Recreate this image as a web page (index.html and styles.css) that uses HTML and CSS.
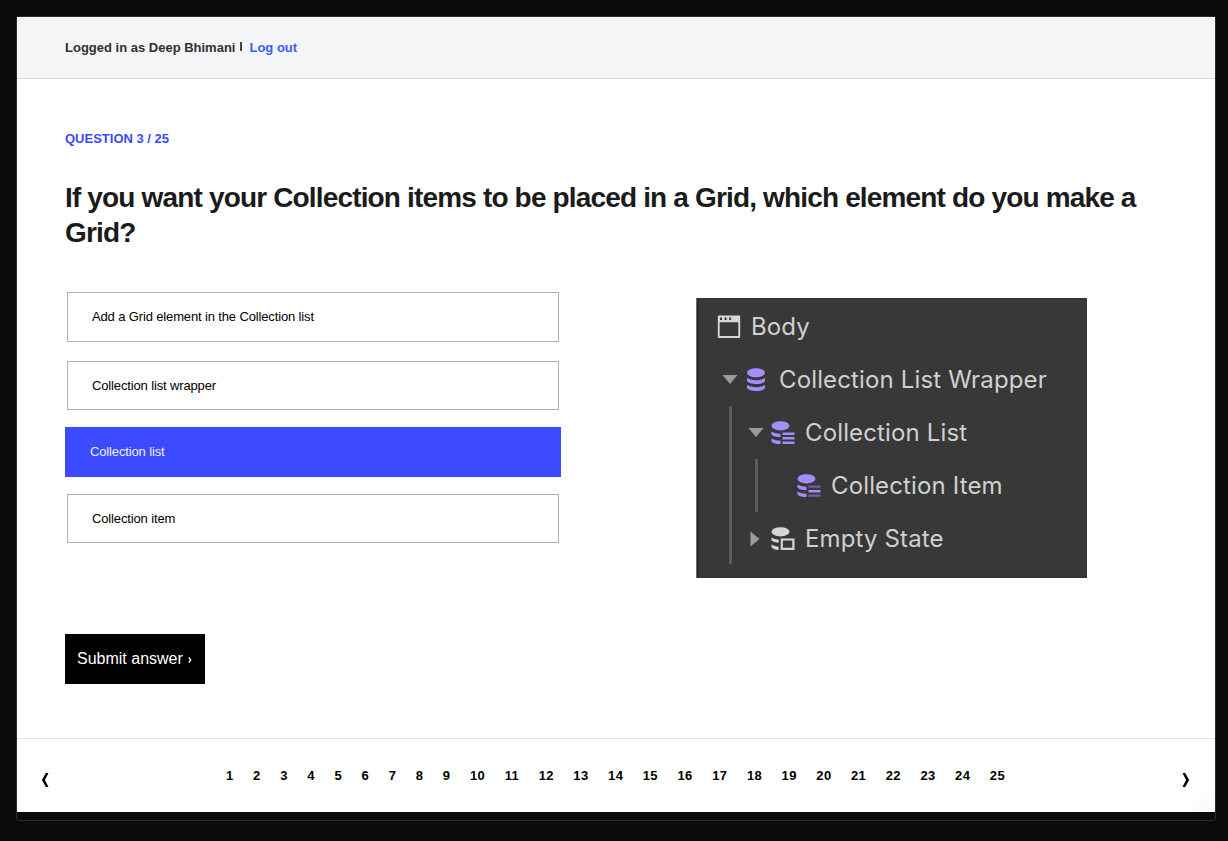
FILE: index.html
```html
<!DOCTYPE html>
<html lang="en">
<head>
<meta charset="utf-8">
<title>Question 3 / 25</title>
<link rel="stylesheet" href="styles.css">
</head>
<body>
<div class="frame">
  <header class="topbar">
    <span class="user">Logged in as Deep Bhimani</span>
    <span class="divider"></span>
    <a class="logout">Log out</a>
  </header>
  <main class="content">
    <div class="eyebrow">QUESTION 3 / 25</div>
    <h1 class="title"><span>If you want your Collection items to be placed in a Grid, which element do you make a</span> <span>Grid?</span></h1>
    <div class="columns">
      <div class="answers">
        <div class="answer first">Add a Grid element in the Collection list</div>
        <div class="answer">Collection list wrapper</div>
        <div class="answer selected">Collection list</div>
        <div class="answer">Collection item</div>
      </div>
      <div class="tree">
        <div class="row body">
          <svg class="icon" viewBox="0 0 24 24"><path d="M2 .5h20a1.200 1.200 0 0 1 1.200 1.200v20a1.200 1.200 0 0 1-1.200 1.200H2a1.200 1.200 0 0 1-1.200-1.200v-20A1.200 1.200 0 0 1 2 .5Zm.7 6.800v13.800h18.600V7.300ZM3 2.600v2.500h2V2.600Zm4.600 0v2.500h2V2.600Zm4.600 0v2.500h2V2.600Z" fill="#d6d6d6" fill-rule="evenodd"/></svg>
          <span class="label">Body</span>
        </div>
        <div class="branch">
          <div class="row">
            <svg class="arrow" viewBox="0 0 16 16"><path d="M.5 3h15L8 12Z" fill="#9b9b9b"/></svg>
            <svg class="icon violet" viewBox="0 0 24 24"><ellipse cx="11" cy="4.800" rx="9" ry="4.600"/><path d="M2 9.800c3.500 3.300 14.500 3.300 18 0v3.300c-2.500 4-15.500 4-18 0ZM2 16.800c3.500 3.300 14.500 3.300 18 0v3.300c-2.500 4-15.500 4-18 0Z"/></svg>
            <span class="label">Collection List Wrapper</span>
          </div>
          <div class="children outer">
            <div class="row">
              <svg class="arrow" viewBox="0 0 16 16"><path d="M.5 3h15L8 12Z" fill="#9b9b9b"/></svg>
              <svg class="icon violet" viewBox="0 0 24 24"><ellipse cx="9.500" cy="4.800" rx="9" ry="4.600"/><path d="M.5 10.500q3.500 2.200 9 2.300v3.300q-6.500-.1-9-2.700ZM.5 17.500q3.500 2.200 9 2.300v3.300q-6.500-.1-9-2.700ZM11.500 11.500h12v2.400h-12ZM11.500 16h12v2.400h-12ZM11.500 20.500h12v2.400h-12Z"/></svg>
              <span class="label">Collection List</span>
            </div>
            <div class="children inner">
              <div class="row">
                <svg class="icon violet" viewBox="0 0 24 24"><ellipse cx="9.500" cy="4.800" rx="9" ry="4.600"/><path d="M.5 10.500q3.500 2.200 9 2.300v3.300q-6.500-.1-9-2.700ZM.5 17.500q3.500 2.200 9 2.300v3.300q-6.500-.1-9-2.700ZM11.500 16h12v2.400h-12Z"/><path opacity=".5" d="M11.500 11.500h12v2.200h-12ZM11.500 20.500h12v2.200h-12Z"/></svg>
                <span class="label">Collection Item</span>
              </div>
            </div>
            <div class="row">
              <svg class="arrow" viewBox="0 0 16 16"><path d="M2.500.5v15l9-7.500Z" fill="#9b9b9b"/></svg>
              <svg class="icon" viewBox="0 0 24 24" fill="#d6d6d6"><ellipse cx="9.500" cy="4.800" rx="9" ry="4.600"/><path d="M.5 10.500q3 2 7.200 2.300v3q-5-.3-7.200-2.500ZM.5 17.500q3 2 7.200 2.300v3.200q-5-.3-7.200-2.700Z"/><path d="M10.800 12.500h11.600v9.400H10.800Z" fill="none" stroke="#d6d6d6" stroke-width="2.200"/></svg>
              <span class="label">Empty State</span>
            </div>
          </div>
        </div>
      </div>
    </div>
    <button class="submit">Submit answer <svg viewBox="0 0 4 6"><path d="M.7.500 2.800 3 .7 5.500" fill="none" stroke="#fff" stroke-width="1.300"/></svg></button>
  </main>
  <footer class="pager">
    <svg class="chevron" viewBox="0 0 8 14"><path d="M4.800 0H7.500L3.900 7l3.600 7H4.800L.9 7Z"/></svg>
    <nav class="pages">
      <a>1</a><a>2</a><a>3</a><a>4</a><a>5</a><a>6</a><a>7</a><a>8</a><a>9</a><a>10</a><a>11</a><a>12</a><a>13</a><a>14</a><a>15</a><a>16</a><a>17</a><a>18</a><a>19</a><a>20</a><a>21</a><a>22</a><a>23</a><a>24</a><a>25</a>
    </nav>
    <svg class="chevron" viewBox="0 0 8 14"><path d="M3.200 0H.5L4.100 7 .5 14h2.700L7.100 7Z"/></svg>
  </footer>
</div>
</body>
</html>
```
FILE: styles.css
```css
* { box-sizing: border-box; }
body {
  margin: 0;
  padding: 16px 12px 20px 16px;
  height: 841px;
  background: #0b0b0b;
  font-family: "Liberation Sans", Arial, sans-serif;
  color: #1b1b1c;
}
.frame {
  width: 1200px;
  height: 805px;
  border: 1px solid #2d2d2e;
  border-radius: 3px;
}
.topbar {
  display: flex;
  align-items: center;
  height: 62px;
  padding: 0 48px;
  background: #f4f5f7;
  border-bottom: 1px solid #d5d7da;
  font-size: 13px;
  font-weight: bold;
  color: #303030;
}
.divider { width: 2px; height: 9px; margin: 0 7px 3px 5px; background: #444; }
.logout { color: #3b5bfb; }
.content {
  height: 660px;
  padding: 51px 48px 0;
  background: #fff;
  border-bottom: 1px solid #dbe3e7;
}
.eyebrow { height: 18px; line-height: 18px; font-size: 13px; font-weight: bold; color: #3b49ff; }
.title { margin: 32px 0 0; font-size: 28px; line-height: 35px; letter-spacing: -0.84px; }
.title span { display: block; white-space: nowrap; }
.columns { display: flex; margin-top: 42px; height: 308px; }
.answers { width: 496px; display: flex; flex-direction: column; }
.answer {
  display: flex;
  align-items: center;
  height: 49px;
  margin: 0 2px 17px;
  padding: 0 24px;
  border: 1px solid #b0b1b4;
  font-size: 13px;
  letter-spacing: -0.14px;
  color: #000;
}
.answer.first { height: 50px; margin-bottom: 19px; padding-bottom: 2px; }
.answer.selected { height: 50px; margin-left: 0; margin-right: 0; padding-bottom: 2px; background: #3b49ff; border-color: #3b49ff; color: #f1f1ff; }
.tree {
  width: 391px;
  height: 280px;
  margin: 6px 0 0 135px;
  padding-top: 2px;
  background: #383838;
  border-left: 1px solid #6c6c6c;
  box-shadow: inset 2px 0 #2c2c2c, inset 0 1px #303030, inset 0 -1px #303030;
  font-family: Inter, sans-serif;
  font-size: 24px;
  color: #d0d0d0;
}
.row { display: flex; align-items: center; height: 53px; }
.row.body { padding-left: 20px; }
.row .icon { width: 24px; height: 24px; flex: none; }
.row .arrow { width: 16px; height: 16px; flex: none; }
.violet { fill: #a58cff; }
.label { white-space: nowrap; letter-spacing: 0.14px; margin-left: 10px; }
.branch { padding-left: 25px; }
.branch .arrow { margin-right: 7px; }
.children.outer { margin-left: 7px; padding-left: 19px; background: linear-gradient(#5c5c5c, #5c5c5c) 0 0 / 3px 158px no-repeat; }
.children.inner { margin-left: 7px; padding-left: 42px; background: linear-gradient(#5c5c5c, #5c5c5c) 0 0 / 3px 53px no-repeat; }
.submit {
  display: flex;
  align-items: center;
  width: 140px;
  height: 50px;
  margin: 34px 0 0;
  padding: 0 12px;
  border: 0;
  background: #000;
  color: #fff;
  font: 16px "Liberation Sans", Arial, sans-serif;
}
.submit svg { width: 4px; height: 6px; margin: 2px 0 0 5px; }
.pager {
  display: flex;
  justify-content: space-between;
  height: 73px;
  padding: 28px 25px 0 24px;
  background: radial-gradient(circle at 100% 100%, #f8f8f9, #fff 28px) #fff;
}
.chevron { width: 8px; height: 14px; margin-top: 6px; }
.pages { display: flex; gap: 19.5px; font-size: 13px; font-weight: bold; line-height: 18px; letter-spacing: 0.37px; color: #000; }
```
